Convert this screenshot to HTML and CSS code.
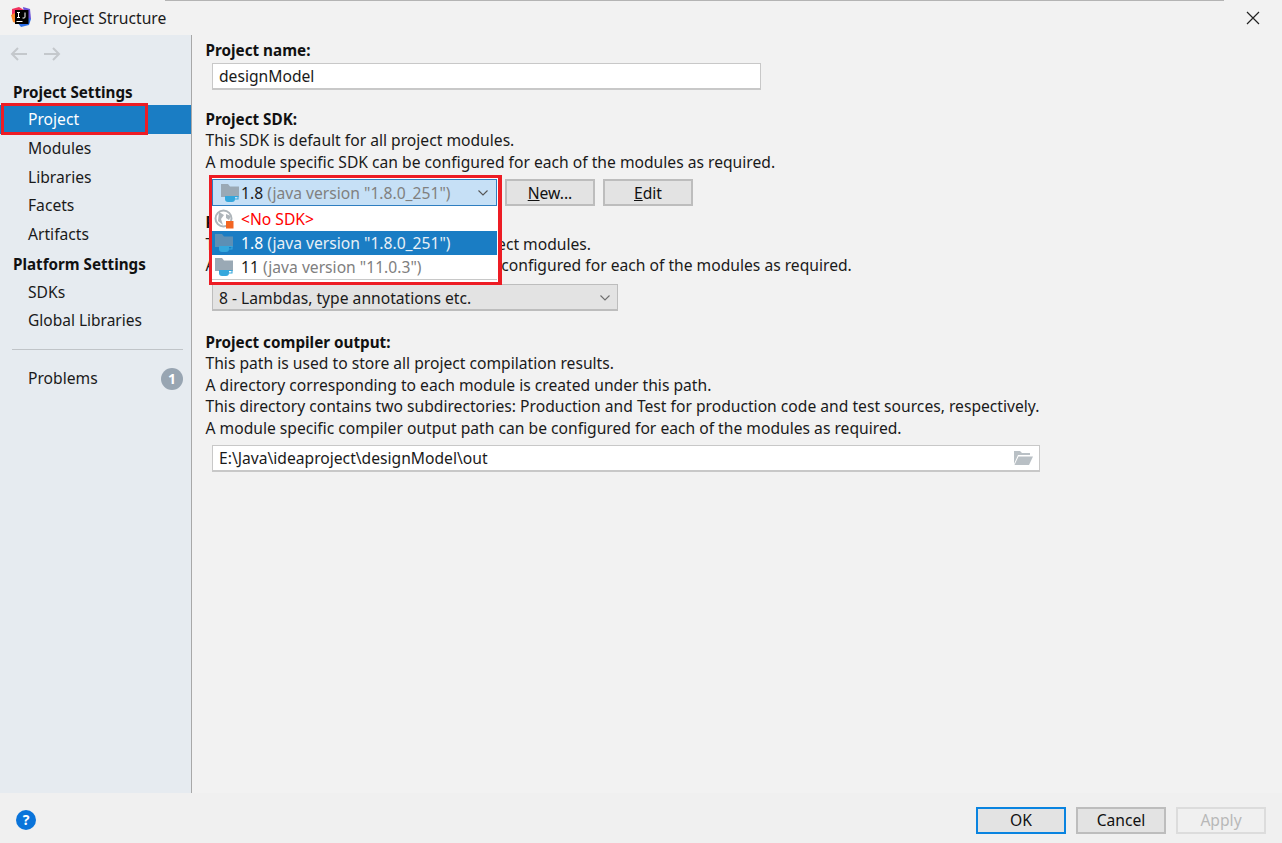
FILE: index.html
```html
<!DOCTYPE html>
<html lang="en">
<head>
<meta charset="utf-8">
<title>Project Structure</title>
<link rel="stylesheet" href="styles.css">
</head>
<body>
<div class="dialog">
  <div class="topline"></div>
  <header class="titlebar">
    <svg class="applogo" viewBox="0 0 20 20" width="20" height="20">
      <path d="M1 2 L8 0 L13 3 L8 10 L1 9Z" fill="#f2315f"/>
      <path d="M12 0 L19 2 L20 12 L14 12Z" fill="#6a4fd6"/>
      <path d="M0 8 L4 6 L5 16 L2 15Z" fill="#fb8a2e"/>
      <path d="M6 15 L14 10 L20 12 L18 18 L10 20Z" fill="#2a6fe8"/>
      <rect x="4" y="3" width="13.500" height="14" fill="#000"/>
      <rect x="5.500" y="14" width="6" height="1" fill="#fff"/>
      <path d="M6 5.500h3M7.500 5.500v5M6 10.500h3M14 5.500v4.500q0 1-1 1h-1.500" fill="none" stroke="#fff" stroke-width="1"/>
    </svg>
    <span class="title">Project Structure</span>
    <svg class="close" viewBox="0 0 14 14" width="14" height="14"><path d="M1 1 L13 13 M13 1 L1 13" stroke="#222" stroke-width="1.200" fill="none"/></svg>
  </header>
  <div class="main">
    <nav class="sidebar">
      <div class="navarrows">
        <svg viewBox="0 0 18 14" width="18" height="14"><path d="M17 7H2M8 1 L2 7 L8 13" fill="none" stroke="#c4c8cc" stroke-width="2"/></svg>
        <svg viewBox="0 0 18 14" width="18" height="14"><path d="M1 7H16M10 1 L16 7 L10 13" fill="none" stroke="#c4c8cc" stroke-width="2"/></svg>
      </div>
      <div class="navhead first">Project Settings</div>
      <div class="navitem selected">Project</div>
      <div class="navitem">Modules</div>
      <div class="navitem">Libraries</div>
      <div class="navitem">Facets</div>
      <div class="navitem">Artifacts</div>
      <div class="navhead">Platform Settings</div>
      <div class="navitem">SDKs</div>
      <div class="navitem tight">Global Libraries</div>
      <div class="navsep"></div>
      <div class="navitem problems"><span>Problems</span><span class="badge">1</span></div>
    </nav>
    <section class="content">
      <h2 class="label">Project name:</h2>
      <div class="field name">designModel</div>

      <h2 class="label sdk">Project SDK:</h2>
      <p class="line">This SDK is default for all project modules.</p>
      <p class="line">A module specific SDK can be configured for each of the modules as required.</p>
      <div class="sdkrow">
        <div class="combo sdkcombo"></div>
        <button class="btn"><u>N</u>ew...</button>
        <button class="btn"><u>E</u>dit</button>
      </div>

      <h2 class="label lang">Project language level:</h2>
      <p class="line">This language level is default for all project modules.</p>
      <p class="line">A module specific language level can be configured for each of the modules as required.</p>
      <div class="combo langcombo">
        <span>8 - Lambdas, type annotations etc.</span>
        <svg class="chev" viewBox="0 0 10 6" width="10" height="6"><path d="M0.500 0.500 L5 5 L9.500 0.500" fill="none" stroke="#6e6e6e" stroke-width="1.100"/></svg>
      </div>

      <h2 class="label output">Project compiler output:</h2>
      <p class="line">This path is used to store all project compilation results.</p>
      <p class="line">A directory corresponding to each module is created under this path.</p>
      <p class="line">This directory contains two subdirectories: Production and Test for production code and test sources, respectively.</p>
      <p class="line">A module specific compiler output path can be configured for each of the modules as required.</p>
      <div class="field path">
        <span>E:\Java\ideaproject\designModel\out</span>
        <svg class="browse" viewBox="0 0 20 16" width="20" height="16"><path d="M1 1h6l2 2h8v2H5L1 14Z" fill="#b9c0c5"/><path d="M5.500 6.500H20L16 15H1.500Z" fill="#b9c0c5"/></svg>
      </div>
    </section>
  </div>
  <footer class="footer">
    <span class="help">?</span>
    <div class="actions">
      <button class="btn wide default">OK</button>
      <button class="btn wide">Cancel</button>
      <button class="btn wide disabled">Apply</button>
    </div>
  </footer>

  <div class="redbox navmark"></div>
  <div class="popup">
    <div class="popcombo">
      <svg class="jdk" viewBox="0 0 18 18" width="18" height="18"><use href="#jdkicon"/></svg>
      <span>1.8 <i>(java version "1.8.0_251")</i></span>
      <svg class="chev" viewBox="0 0 10 6" width="10" height="6"><path d="M0.500 0.500 L5 5 L9.500 0.500" fill="none" stroke="#555" stroke-width="1.100"/></svg>
    </div>
    <ul class="poplist">
      <li class="nosdk">
        <svg class="jdk" viewBox="0 0 20 20" width="20" height="20"><circle cx="9.500" cy="9.500" r="8" fill="none" stroke="#aeb5ba" stroke-width="2"/><path d="M5 3 L10 6 L7 10 L9 16 L4 12Z M12 5 L17 7 L15 11 L12 9Z" fill="#aeb5ba"/><rect x="12" y="12" width="7.500" height="7.500" fill="#f26522"/></svg>
        <span>&lt;No SDK&gt;</span>
      </li>
      <li class="active">
        <svg class="jdk" viewBox="0 0 18 18" width="18" height="18"><use href="#jdkicon"/></svg>
        <span>1.8 <i>(java version "1.8.0_251")</i></span>
      </li>
      <li>
        <svg class="jdk" viewBox="0 0 18 18" width="18" height="18"><use href="#jdkicon"/></svg>
        <span>11 <i>(java version "11.0.3")</i></span>
      </li>
    </ul>
  </div>
  <svg class="defs" width="0" height="0">
    <symbol id="jdkicon" viewBox="0 0 18 18">
      <path d="M0 0h7l2 2.500h9v10.500H0Z"/>
      <path d="M4 12h10v3q0 3-3 3H7q-3 0-3-3Z" fill="#35a7dc"/>
      <path d="M14 12.500h3v2.500h-3" fill="none" stroke="#35a7dc" stroke-width="1.100"/>
    </symbol>
  </svg>
</div>
</body>
</html>
```

FILE: styles.css
```css
* { box-sizing: border-box; }
html, body { margin: 0; padding: 0; }
body {
  width: 1282px;
  height: 843px;
  overflow: hidden;
  background: #f2f2f2;
  font-family: "Noto Sans", "Open Sans", sans-serif;
  font-size: 15.650px;
  color: #1a1a1a;
}
.dialog { position: relative; width: 1282px; height: 843px; display: flex; flex-direction: column; }
.topline { position: absolute; left: 165px; top: 0; width: 1059px; height: 1px; background: #b4b4b4; }
.titlebar { height: 35px; display: flex; align-items: center; padding: 0 22px 0 11px; flex: none; }
.applogo { flex: none; margin-top: -2px; }
.title { margin-left: 12px; flex: 1; }
.close { flex: none; margin-top: 1px; }
.main { flex: 1; display: flex; min-height: 0; }
.sidebar {
  width: 192px;
  flex: none;
  background: #e6ebf0;
  border-right: 1px solid #a8a8a8;
  padding-top: 9px;
}
.navarrows { display: flex; gap: 15px; height: 20px; padding-left: 10px; align-items: center; margin-bottom: 14px; }
.navhead { height: 28.800px; line-height: 28.800px; padding: 1px 0 0 13px; font-weight: 700; font-size: 15.200px; color: #111; }
.navhead.first { height: 27px; padding-top: 0; }
.navitem { height: 28.800px; line-height: 28.800px; padding-left: 28px; }
.navitem.tight { line-height: 27px; font-size: 15.500px; }
.navitem.selected { background: #1a7dc4; color: #fff; }
.navsep { height: 1px; background: #c0c4c8; margin: 14px 8px 14px 12px; }
.problems { display: flex; justify-content: space-between; align-items: center; padding-right: 8px; }
.badge {
  width: 22px; height: 22px; border-radius: 50%;
  background: #98a5b2; color: #fff; font-weight: 700;
  text-align: center; line-height: 22px; font-size: 14px;
}
.content { flex: 1; padding: 5px 0 0 13.500px; min-width: 0; }
.label { margin: 0; font-size: 15.250px; font-weight: 700; line-height: 21.500px; color: #111; }
.line { margin: 0; line-height: 21.500px; white-space: nowrap; }
.field {
  background: #fff; border: 1px solid #c8c8c8; border-bottom-width: 2px; height: 27px;
  margin-left: 6.500px; padding-left: 6px; display: flex; align-items: center; justify-content: space-between;
}
.field.name { width: 549px; margin-top: 1px; }
.label.sdk { margin-top: 19px; }
.sdkrow { display: flex; margin: 6px 0 0 6.500px; height: 27px; }
.combo { background: #e3e3e3; border: 1px solid #bdbdbd; border-bottom-width: 2px; height: 27px; }
.sdkcombo { width: 285px; margin-right: 8px; }
.btn {
  font: inherit; color: #111; background: #e3e3e3;
  border: 2px solid #bdbdbd; height: 27px; width: 90px; padding: 0; margin-right: 8px;
}
.label.lang { margin-top: 6px; }
.langcombo {
  width: 406px; margin: 7px 0 0 6.500px; padding: 2px 7px 0 6px;
  display: flex; align-items: center; justify-content: space-between;
}
.label.output { margin: 21px 0 0; }
.field.path { width: 828px; margin-top: 6px; padding-right: 6px; }
.footer {
  height: 50px; flex: none; background: #f0f0f0; display: flex; align-items: center;
  justify-content: space-between; padding: 4px 16px 0 16px;
}
.help {
  width: 20px; height: 20px; border-radius: 50%; background: #0a74da; color: #fff;
  text-align: center; line-height: 20px; font-size: 14px; font-weight: 700;
}
.actions { display: flex; gap: 10px; }
.btn.wide { width: 90px; height: 27px; margin: 0; }
.btn.default { border-color: #0a84e0; }
.btn.disabled { background: #f0f0f0; border-color: #dcdcdc; color: #b8b8b8; }
.redbox { position: absolute; border: 3px solid #ed1c24; pointer-events: none; }
.navmark { left: 1px; top: 103px; width: 147px; height: 32px; }
.popup {
  position: absolute; left: 209px; top: 175px; width: 293px; height: 110px;
  border: 3px solid #ed1c24; border-right-width: 4px; background: #fff;
}
.popcombo {
  height: 27px; margin: 1px 1px 0 0; background: #c6e0f6; border: 1px solid #2f7ec0;
  display: flex; align-items: center; padding: 0 8px 0 8px;
}
.popcombo .chev { margin-left: auto; }
.jdk { flex: none; margin-right: 2px; fill: #9aa9b5; }
.popup i { font-style: normal; color: #808080; }
.poplist { list-style: none; margin: 1px 1px 0 0; padding: 0; border-bottom: 1px solid #c8c8c8; }
.poplist li { height: 24px; display: flex; align-items: center; padding-left: 3px; }
.poplist li .jdk { margin-right: 8px; }
.poplist li.nosdk .jdk { margin-left: -1px; margin-right: 7px; }
.poplist li.nosdk span { color: #ff0000; }
.poplist li.active { background: #1a7dc4; color: #fff; }
.poplist li.active .jdk { fill: #5c8fb5; }
.poplist li.active i { color: #e8f0f6; }
.defs { position: absolute; }
```
